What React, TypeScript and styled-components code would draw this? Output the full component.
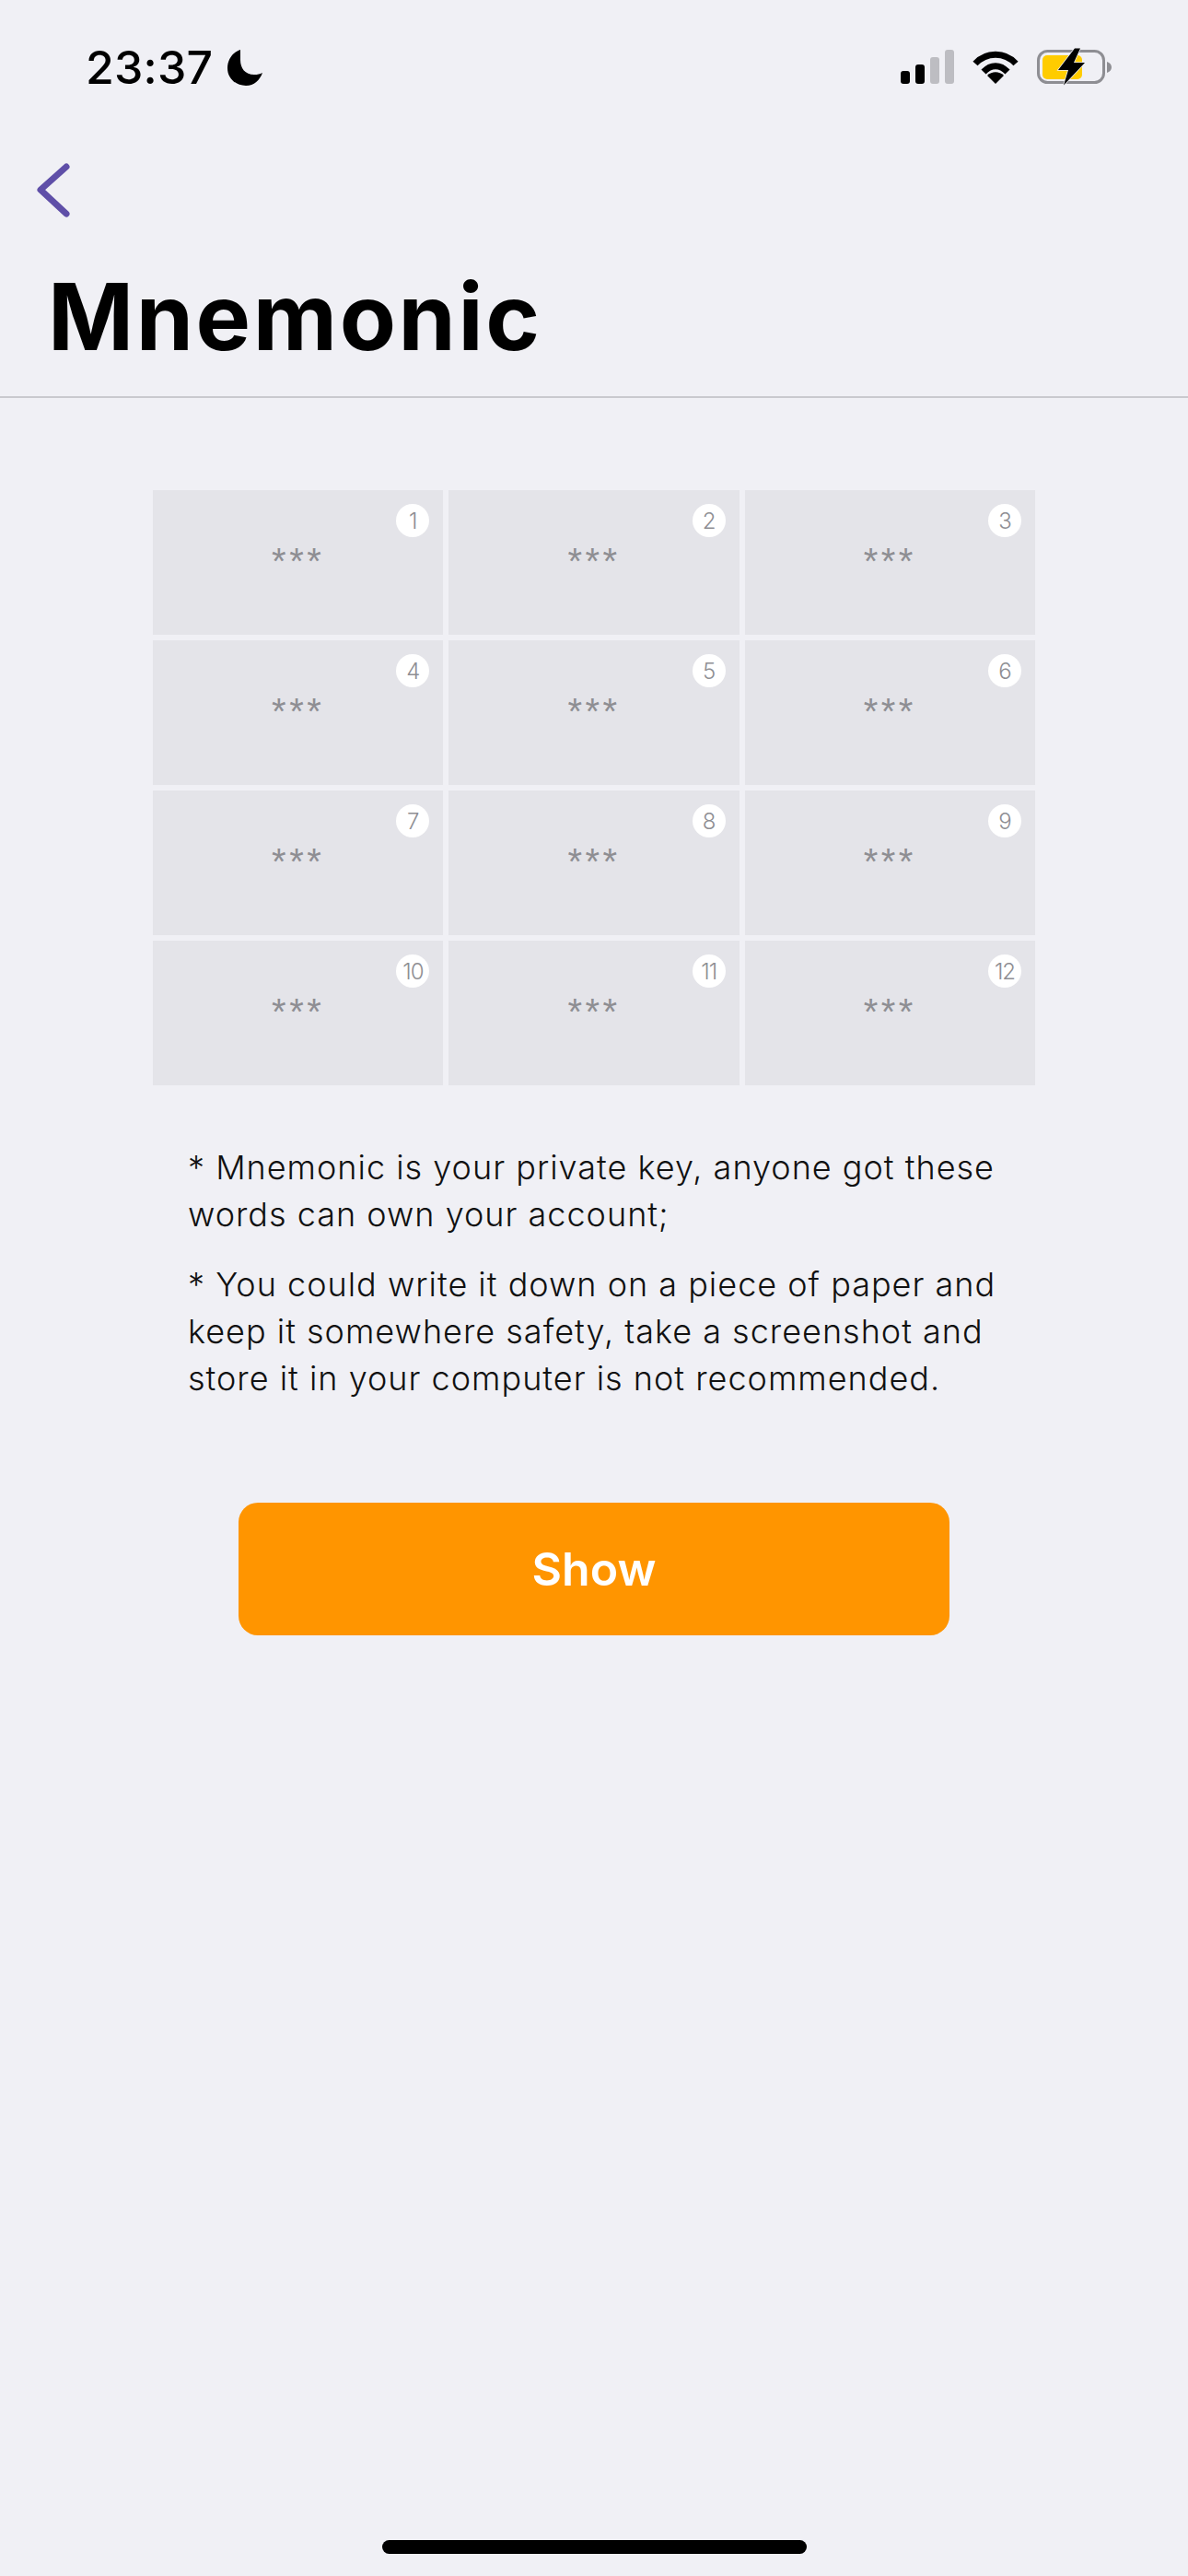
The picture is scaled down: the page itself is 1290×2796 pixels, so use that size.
import React from "react";
import styled, { createGlobalStyle } from "styled-components";

const Global = createGlobalStyle`
  html, body { margin: 0; padding: 0; background: #f0f0f5; }
  * { box-sizing: border-box; }
`;

const Page = styled.div`
  width: 1290px;
  height: 2796px;
  background: #f0f0f5;
  display: flex;
  flex-direction: column;
  font-family: Inter, "Liberation Sans", sans-serif;
  color: #000;
`;

const StatusBar = styled.div`
  height: 160px;
  padding: 47px 82px 0 93px;
  display: flex;
  justify-content: space-between;
  align-items: flex-start;
`;

const TimeGroup = styled.div`
  display: flex;
  align-items: center;
  gap: 16px;
`;

const Time = styled.span`
  font-size: 50px;
  line-height: 52px;
  font-weight: 500;
  letter-spacing: 0.2px;
`;

const StatusIcons = styled.div`
  display: flex;
  align-items: flex-start;
  gap: 20px;
  padding-top: 5px;
`;

const BackRow = styled.div`
  height: 74px;
  padding: 16px 0 0 38px;
`;

const Title = styled.h1`
  margin: 0;
  height: 198px;
  padding: 40px 0 0 52px;
  border-bottom: 2px solid #c9c9ce;
  font-size: 100px;
  line-height: 140px;
  font-weight: 700;
  letter-spacing: 2.6px;
`;

const Grid = styled.div`
  margin: 100px 0 0 166px;
  width: 958px;
  display: grid;
  grid-template-columns: repeat(3, 1fr);
  grid-auto-rows: 157px;
  gap: 6px;
`;

const Cell = styled.div`
  position: relative;
  background: #e4e4e9;
  display: flex;
  justify-content: center;
  padding-top: 57px;
`;

const Stars = styled.span`
  font-family: "Liberation Sans", sans-serif;
  font-size: 40px;
  line-height: 40px;
  letter-spacing: 3.500px;
  color: #8e8e93;
`;

const Badge = styled.span`
  position: absolute;
  top: 15px;
  right: 15px;
  width: 36px;
  height: 36px;
  border-radius: 50%;
  background: #fff;
  display: flex;
  align-items: center;
  justify-content: center;
  font-size: 24px;
  font-weight: 300;
  letter-spacing: -1px;
  color: #8e8e93;
`;

const Notes = styled.div`
  margin: 64px 0 0 204px;
  width: 900px;
  display: flex;
  flex-direction: column;
  gap: 25px;
`;

const Note = styled.p`
  margin: 0;
  font-size: 36px;
  line-height: 51px;
  font-weight: 300;
  letter-spacing: 1px;
  color: #111;
  white-space: pre-line;
`;

const ShowButton = styled.button`
  margin: 109px 0 0 259px;
  width: 772px;
  height: 144px;
  border: 0;
  border-radius: 21px;
  background: #ff9500;
  color: #fff;
  font-family: Inter, "Liberation Sans", sans-serif;
  font-size: 50px;
  font-weight: 600;
`;

const Spacer = styled.div`
  flex: 1;
`;

const HomeBar = styled.div`
  align-self: center;
  width: 461px;
  height: 15px;
  margin-bottom: 24px;
  border-radius: 8px;
  background: #000;
`;

const notes = [
  "* Mnemonic is your private key, anyone got these\nwords can own your account;",
  "* You could write it down on a piece of paper and\nkeep it somewhere safety, take a screenshot and\nstore it in your computer is not recommended.",
];

export default function App() {
  return (
    <Page>
      <Global />
      <StatusBar>
        <TimeGroup>
          <Time>23:37</Time>
          <svg width="38" height="39" viewBox="0 0 38 39">
            <path d="M14 0C5 3 0 11 0 20c0 11 9 19 20 19 9 0 15-6 18-14-3 1.500-5 2-9 2-10 0-15-7-15-16 0-4 0-8 0-11z" fill="#000" />
          </svg>
        </TimeGroup>
        <StatusIcons>
          <svg width="58" height="41" viewBox="0 -2 58 41">
            <rect x="0" y="23" width="10" height="14" rx="3" fill="#000" />
            <rect x="16" y="16" width="10" height="21" rx="3" fill="#000" />
            <rect x="32" y="8" width="10" height="29" rx="3" fill="#bdbdc2" />
            <rect x="48" y="0" width="10" height="37" rx="3" fill="#bdbdc2" />
          </svg>
          <svg width="50" height="41" viewBox="0 -2 50 41">
            <path d="M3 15C15 2 35 2 47 15" fill="none" stroke="#000" strokeWidth="7" />
            <path d="M12 24C20 15.500 30 15.500 38 24" fill="none" stroke="#000" strokeWidth="7" />
            <path d="M16 28C21 23 29 23 34 28L25 37z" fill="#000" />
          </svg>
          <svg width="82" height="41" viewBox="0 0 82 41">
            <rect x="1.500" y="3.500" width="71" height="34" rx="10" fill="none" stroke="#8e8e93" strokeWidth="3" />
            <rect x="6" y="8" width="43" height="26" rx="5" fill="#ffcc00" />
            <path d="M76 15c3 1 5 3 5 6s-2 5-5 6z" fill="#8e8e93" />
            <path d="M41 0.500 L23 24 H34 L29 40.500 L52 16 H40 L47 0.500z" fill="#000" stroke="#f0f0f5" strokeWidth="1.500" paintOrder="stroke" />
          </svg>
        </StatusIcons>
      </StatusBar>
      <BackRow>
        <svg width="40" height="62" viewBox="0 0 40 62">
          <path d="M34 5L6 30l28 26" fill="none" stroke="#5f4fa8" strokeWidth="7" strokeLinecap="round" strokeLinejoin="round" />
        </svg>
      </BackRow>
      <Title>Mnemonic</Title>
      <Grid>
        {Array.from({ length: 12 }, (_, i) => (
          <Cell key={i}>
            <Stars>***</Stars>
            <Badge>{i + 1}</Badge>
          </Cell>
        ))}
      </Grid>
      <Notes>
        {notes.map((n) => (
          <Note key={n}>{n}</Note>
        ))}
      </Notes>
      <ShowButton>Show</ShowButton>
      <Spacer />
      <HomeBar />
    </Page>
  );
}
